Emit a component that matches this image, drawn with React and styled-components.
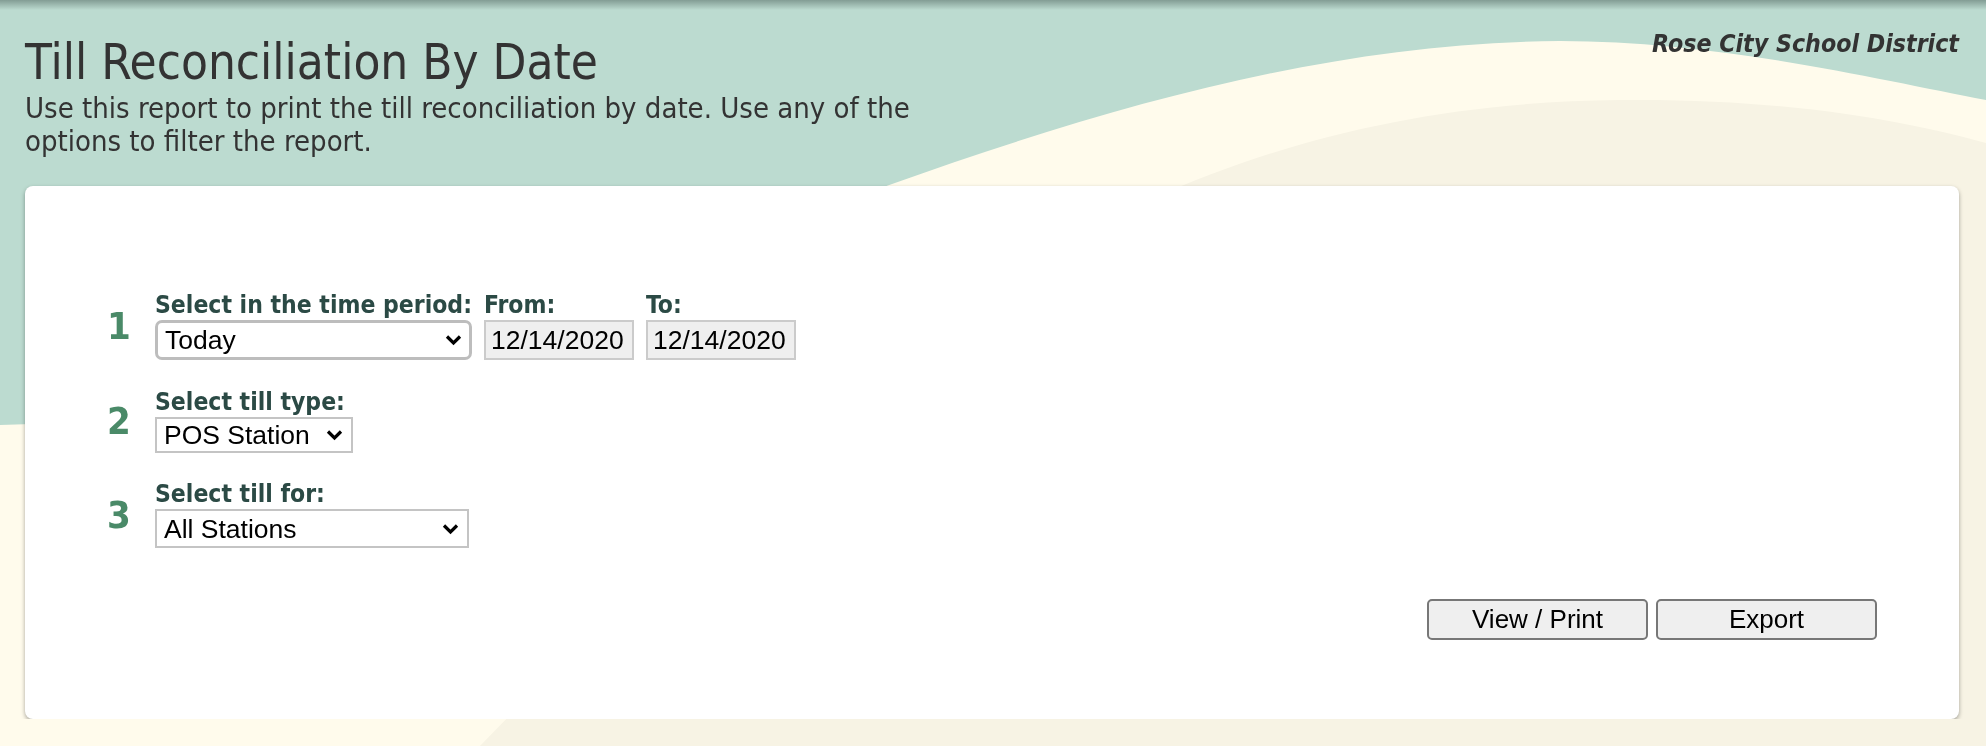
import React from 'react';
import styled, { createGlobalStyle } from 'styled-components';

const GlobalStyle = createGlobalStyle`
  html, body {
    margin: 0;
    padding: 0;
    background: #fffbec;
  }
  body {
    font-family: "DejaVu Sans Condensed", "DejaVu Sans", sans-serif;
    font-stretch: condensed;
    color: #333;
  }
`;

const Backdrop = styled.svg`
  position: fixed;
  top: 0;
  left: 0;
  width: 100vw;
  height: 100vh;
  z-index: 0;
  display: block;
`;

const TopShade = styled.div`
  position: fixed;
  top: 0;
  left: 0;
  right: 0;
  height: 10px;
  background: linear-gradient(rgba(60, 80, 75, 0.45), rgba(60, 80, 75, 0));
  z-index: 1;
`;

const Page = styled.div`
  position: relative;
  z-index: 2;
  padding: 35px 27px 0 25px;
`;

const Header = styled.header`
  display: flex;
  justify-content: space-between;
  align-items: flex-start;
`;

const TitleBlock = styled.div`
  display: flex;
  flex-direction: column;
`;

const Title = styled.h1`
  margin: 0;
  font-size: 49px;
  font-weight: normal;
  line-height: 56px;
  color: #333;
`;

const Intro = styled.p`
  margin: 1px 0 0;
  width: 925px;
  font-size: 29px;
  line-height: 33px;
  color: #333;
`;

const District = styled.div`
  margin-top: -6px;
  font-size: 24.7px;
  font-weight: bold;
  font-style: italic;
  color: #333;
`;

const Card = styled.main`
  margin-top: 28px;
  height: 533px;
  box-sizing: border-box;
  background: #fff;
  border-radius: 8px;
  box-shadow: 0 2px 4px rgba(0, 0, 0, 0.35);
  padding: 106px 82px 0 82px;
  display: flex;
  flex-direction: column;
`;

const Steps = styled.div`
  display: flex;
  flex-direction: column;
  gap: 28.5px;
`;

const Step = styled.div`
  display: flex;
  align-items: center;
  gap: 30px;
`;

const StepNo = styled.div`
  width: 18px;
  font-size: 38px;
  font-weight: bold;
  color: #4a8a68;
  text-align: center;
`;

const Fields = styled.div`
  display: flex;
  gap: 12px;
  align-items: flex-end;
`;

const Field = styled.label`
  display: flex;
  flex-direction: column;
  gap: 2px;
`;

const Label = styled.span`
  font-size: 24.5px;
  font-weight: bold;
  color: #2b4a45;
  line-height: 26px;
`;

const SelectWrap = styled.div`
  position: relative;
  width: ${(p) => p.$width}px;
`;

const Select = styled.select`
  appearance: none;
  width: 100%;
  height: ${(p) => p.$height || 38}px;
  box-sizing: border-box;
  margin: 0;
  padding: 0 30px 0 7px;
  font-family: "Liberation Sans", Arial, sans-serif;
  font-size: 26.5px;
  color: #000;
  background: #fff;
  border: ${(p) => (p.$focused ? '3px solid #bdbdbd' : '2px solid #c4c4c4')};
  border-radius: ${(p) => (p.$focused ? '7px' : '0')};
  outline: none;
`;

const Chevron = styled.svg`
  position: absolute;
  right: 10px;
  top: 50%;
  transform: translateY(-50%);
  pointer-events: none;
`;

const DateBox = styled.input`
  width: 150px;
  height: 40px;
  box-sizing: border-box;
  margin: 0;
  padding: 0 5px;
  font-family: "Liberation Sans", Arial, sans-serif;
  font-size: 26.5px;
  color: #000;
  background: #efefef;
  border: 2px solid #cbcbcb;
  outline: none;
`;

const Actions = styled.div`
  margin-top: 51px;
  display: flex;
  justify-content: flex-end;
  gap: 8px;
`;

const Button = styled.button`
  width: 221px;
  height: 41px;
  padding: 0;
  font-family: "Liberation Sans", Arial, sans-serif;
  font-size: 26px;
  color: #000;
  background: #efefef;
  border: 2px solid #777;
  border-radius: 5px;
  cursor: pointer;
`;

function DropDown({ width, height, focused, value, options }) {
  return (
    <SelectWrap $width={width}>
      <Select $height={height} $focused={focused} defaultValue={value}>
        {options.map((o) => (
          <option key={o}>{o}</option>
        ))}
      </Select>
      <Chevron width="17" height="12" viewBox="0 0 17 12">
        <path d="M2 2.5 L8.5 9 L15 2.5" fill="none" stroke="#000" strokeWidth="3.2" />
      </Chevron>
    </SelectWrap>
  );
}

export default function App() {
  return (
    <>
      <GlobalStyle />
      <Backdrop viewBox="0 0 1986 746" preserveAspectRatio="none">
        <rect x="0" y="0" width="1986" height="746" fill="#bcdbd0" />
        <path
          d="M0,425 C500,420 1000,45 1560,41 C1720,41 1880,80 1986,100 L1986,746 L0,746 Z"
          fill="#fffbec"
        />
        <path
          d="M480,746 C800,420 1080,105 1620,100 C1800,98 1920,125 1986,143 L1986,746 Z"
          fill="#f7f3e4"
        />
      </Backdrop>
      <TopShade />
      <Page>
        <Header>
          <TitleBlock>
            <Title>Till Reconciliation By Date</Title>
            <Intro>
              Use this report to print the till reconciliation by date. Use any of the options to
              filter the report.
            </Intro>
          </TitleBlock>
          <District>Rose City School District</District>
        </Header>
        <Card>
          <Steps>
            <Step>
              <StepNo>1</StepNo>
              <Fields>
                <Field>
                  <Label>Select in the time period:</Label>
                  <DropDown
                    width={317}
                    height={40}
                    focused
                    value="Today"
                    options={['Today', 'Yesterday', 'This Week', 'This Month', 'Custom']}
                  />
                </Field>
                <Field>
                  <Label>From:</Label>
                  <DateBox readOnly value="12/14/2020" />
                </Field>
                <Field>
                  <Label>To:</Label>
                  <DateBox readOnly value="12/14/2020" />
                </Field>
              </Fields>
            </Step>
            <Step>
              <StepNo>2</StepNo>
              <Field>
                <Label>Select till type:</Label>
                <DropDown width={198} height={36} value="POS Station" options={['POS Station', 'Cashier']} />
              </Field>
            </Step>
            <Step>
              <StepNo>3</StepNo>
              <Field>
                <Label>Select till for:</Label>
                <DropDown width={314} height={39} value="All Stations" options={['All Stations']} />
              </Field>
            </Step>
          </Steps>
          <Actions>
            <Button type="button">View / Print</Button>
            <Button type="button">Export</Button>
          </Actions>
        </Card>
      </Page>
    </>
  );
}
